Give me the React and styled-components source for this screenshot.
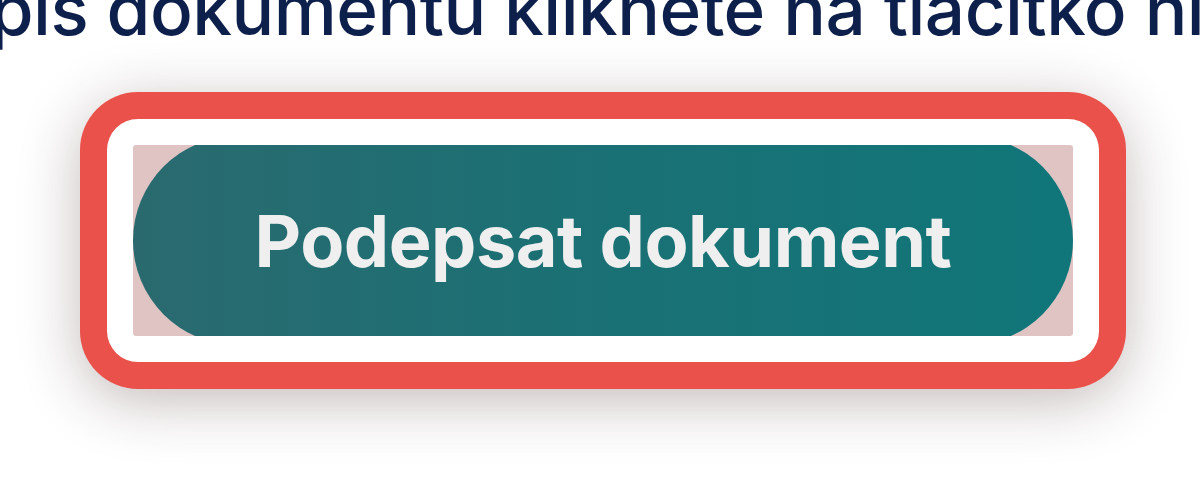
import React from 'react'
import styled, { createGlobalStyle } from 'styled-components'

const GlobalStyle = createGlobalStyle`
  html, body {
    margin: 0;
    padding: 0;
    background: #ffffff;
    overflow: hidden;
  }
  body {
    font-family: Inter, "Noto Sans", "Liberation Sans", sans-serif;
  }
`

const Page = styled.div`
  width: 1200px;
  height: 477px;
  overflow: hidden;
  display: flex;
  flex-direction: column;
`

const Caption = styled.p`
  margin: -27px 0 0 -271px;
  font-size: 71px;
  line-height: 72px;
  font-weight: 500;
  letter-spacing: -0.5px;
  color: #0d1f4b;
  white-space: nowrap;
`

const FocusRing = styled.div`
  margin: 47px 0 0 80px;
  width: 1046px;
  box-sizing: border-box;
  padding: 27px;
  background: #e9514a;
  border-radius: 58px;
  box-shadow: 0 12px 60px rgba(70, 40, 40, 0.32);
`

const Gap = styled.div`
  padding: 26px;
  background: #ffffff;
  border-radius: 31px;
`

const Clip = styled.div`
  height: 191px;
  display: flex;
  align-items: center;
  justify-content: center;
  background: #dfc4c3;
  border-radius: 3px;
  overflow: hidden;
`

const SignButton = styled.button`
  flex: none;
  width: 100%;
  height: 209px;
  border: none;
  border-radius: 105px;
  padding: 0;
  background: linear-gradient(90deg, #2a6a6f 0%, #1b7074 45%, #107679 100%);
  color: #efefef;
  font-family: Inter, "Noto Sans", "Liberation Sans", sans-serif;
  font-size: 72px;
  font-weight: 700;
  letter-spacing: -0.5px;
  cursor: pointer;
`

export default function App() {
  return (
    <Page>
      <GlobalStyle />
      <Caption>Pro podpis dokumentu klikněte na tlačítko níže.</Caption>
      <FocusRing>
        <Gap>
          <Clip>
            <SignButton type="button">Podepsat dokument</SignButton>
          </Clip>
        </Gap>
      </FocusRing>
    </Page>
  )
}
